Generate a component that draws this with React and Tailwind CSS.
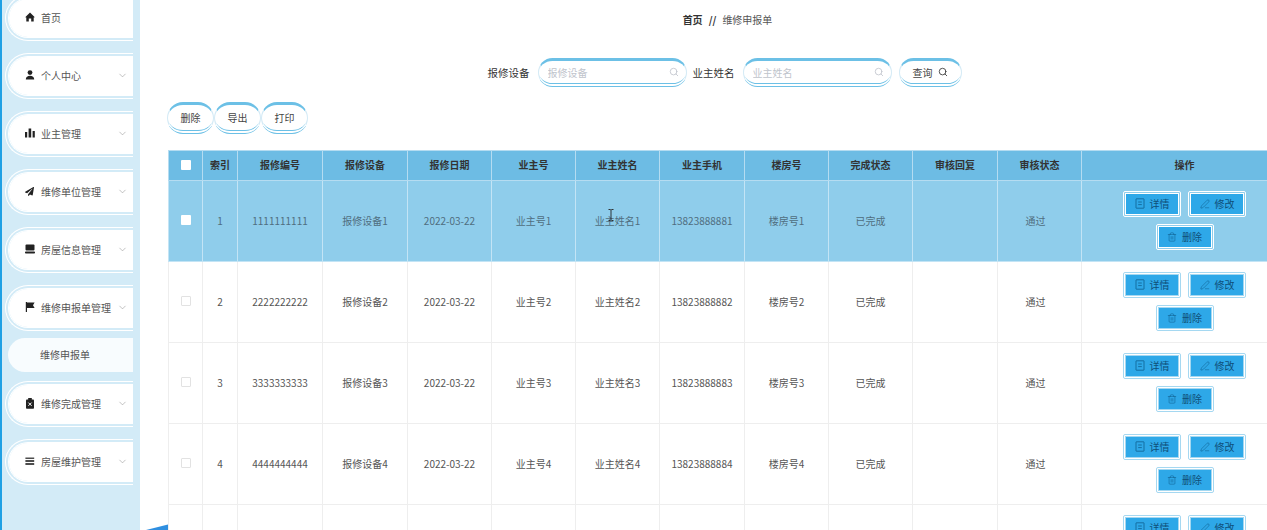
import { Search, ChevronDown, PenLine, Trash2 } from 'lucide-react';
import { FaPaperPlane } from 'react-icons/fa';

const font = { fontFamily: '"Noto Sans CJK SC", "Noto Sans", sans-serif' };

const HomeIcon = () => (
  <svg width="10" height="10" viewBox="0 0 10 10" fill="#222">
    <path d="M5 0.6L9.8 5.2L8.7 5.6V9.4H6.2V6.6H3.8V9.4H1.3V5.6L0.2 5.2Z" />
  </svg>
);
const UserIcon = () => (
  <svg width="10" height="10" viewBox="0 0 10 10" fill="#222">
    <circle cx="5" cy="2.6" r="2.4" />
    <path d="M0.8 9.6C0.8 7 2.6 5.8 5 5.8C7.4 5.8 9.2 7 9.2 9.6Z" />
  </svg>
);
const BarsIcon = () => (
  <svg width="10" height="10" viewBox="0 0 10 10" fill="#222">
    <rect x="0" y="4" width="2.2" height="5.5" />
    <rect x="3.6" y="0.5" width="2.6" height="9" />
    <rect x="7.6" y="3" width="2.2" height="6.5" />
  </svg>
);
const ScreenIcon = () => (
  <svg width="10" height="10" viewBox="0 0 10 10" fill="#222">
    <rect x="0.5" y="0.5" width="9" height="6" rx="1" />
    <rect x="0" y="7.5" width="10" height="2" rx="0.8" />
  </svg>
);
const FlagIcon = () => (
  <svg width="10" height="10" viewBox="0 0 10 10" fill="#222">
    <rect x="0.8" y="0" width="1.2" height="10" />
    <path d="M2 0.6H9.6L8 3.2L9.6 6H2Z" />
  </svg>
);
const ClaimIcon = () => (
  <svg width="10" height="11" viewBox="0 0 10 11">
    <rect x="1" y="1.4" width="8" height="9.4" rx="0.8" fill="#222" />
    <rect x="3.2" y="0" width="3.6" height="2.4" fill="#222" />
    <path d="M3.4 4.6L6.6 7.8M6.6 4.6L3.4 7.8" stroke="#fff" strokeWidth="1" />
  </svg>
);
const LinesIcon = () => (
  <svg width="10" height="10" viewBox="0 0 10 10" fill="#222">
    <rect x="0.4" y="1.6" width="8.8" height="1.2" />
    <rect x="0.4" y="4.2" width="8.8" height="1.6" />
    <rect x="0.4" y="7.2" width="8.8" height="1.6" />
  </svg>
);
const TicketIcon = () => (
  <svg width="10" height="11" viewBox="0 0 10 11" fill="none" stroke="#0f5f8f" strokeWidth="0.8">
    <rect x="1" y="0.8" width="8" height="9.4" rx="0.4" />
    <path d="M3.2 4H6.8M3.2 6.6H6.8" />
  </svg>
);

const menus = [
  { label: '首页', icon: <HomeIcon />, plain: true },
  { label: '个人中心', icon: <UserIcon /> },
  { label: '业主管理', icon: <BarsIcon /> },
  { label: '维修单位管理', icon: <FaPaperPlane size={9} color="#222" /> },
  { label: '房屋信息管理', icon: <ScreenIcon /> },
  { label: '维修申报单管理', icon: <FlagIcon />, sub: '维修申报单' },
  { label: '维修完成管理', icon: <ClaimIcon /> },
  { label: '房屋维护管理', icon: <LinesIcon /> },
];

const headers = ['索引', '报修编号', '报修设备', '报修日期', '业主号', '业主姓名', '业主手机', '楼房号', '完成状态', '审核回复', '审核状态', '操作'];

const rows = [1, 2, 3, 4, 5].map((n) => ({
  n,
  values: [
    String(n),
    String(n).repeat(10),
    '报修设备' + n,
    '2022-03-22',
    '业主号' + n,
    '业主姓名' + n,
    '1382388888' + n,
    '楼房号' + n,
    '已完成',
    '',
    '通过',
  ],
}));

function MenuItem({ item }) {
  return (
    <div className="flex h-[46px] items-center rounded-l-[24px] border-[4px] border-r-0 border-double border-white bg-white bg-clip-padding pb-[2px] pl-[16px] pr-[5px]">
      <span className="flex w-[16px] justify-start">{item.icon}</span>
      <span className="flex-1 text-[10px] text-[#555]">{item.label}</span>
      {!item.plain && <ChevronDown size={11} color="#888" strokeWidth={1.1} />}
    </div>
  );
}

const pillBorder = 'rounded-full border-x border-t-[3px] border-b-[4px] border-x-[#d5ebf6] border-t-[#6cc0e6] border-b-[#6cc0e6] border-double [border-top-style:solid] [border-left-style:solid] [border-right-style:solid] bg-white bg-clip-padding';

function SearchField({ placeholder }) {
  return (
    <div className={`flex h-[29px] w-[149px] items-center pl-[9px] pr-[7px] ${pillBorder}`}>
      <input placeholder={placeholder} className="w-full min-w-0 bg-transparent text-[10px] outline-none placeholder:text-[#c0c4cc]" />
      <Search size={10} color="#c0c4cc" className="shrink-0" />
    </div>
  );
}

function PillButton({ children, className = '' }) {
  return (
    <button className={`flex items-center justify-center gap-[5px] text-[10px] text-[#444] ${pillBorder} ${className}`}>
      {children}
    </button>
  );
}

function ActionButton({ icon, label, selected }) {
  return (
    <button className={`flex h-[26px] w-[58px] items-center justify-center gap-[5px] rounded-[2px] border-[3px] border-double bg-[#2ea8e8] bg-clip-padding text-[10px] text-[#0f4f78] ${selected ? 'border-white' : 'border-[#a5d8f1]'}`}>
      {icon}
      {label}
    </button>
  );
}

export default function App() {
  return (
    <div className="flex h-[530px] w-full overflow-hidden bg-white" style={font}>
      <aside className="flex w-[140px] shrink-0 flex-col overflow-hidden border-l-2 border-[#1fa0e4] bg-[#d3ebf7] pl-[3px] pr-[7px]">
        <div className="-mt-[5px] flex flex-col gap-[12px]">
          {menus.map((item) => (
            <div key={item.label}>
              <MenuItem item={item} />
              {item.sub && (
                <div className="mb-[-3px] ml-[3px] mt-[7px] flex h-[34px] items-center rounded-l-full bg-[#f8fcfe] pb-[2px] pl-[32px] text-[10px] text-[#555]">
                  {item.sub}
                </div>
              )}
            </div>
          ))}
        </div>
      </aside>

      <main className="relative min-w-0 flex-1 overflow-hidden pl-[27px]">
        <div className="w-[1119px]">
          <div className="flex h-[38px] items-center justify-center pl-[2px] text-[10px]">
            <span className="font-bold text-[#333]">首页</span>
            <span className="mx-[6px] font-bold text-[#333]">//</span>
            <span className="text-[#555]">维修申报单</span>
          </div>

          <div className="mt-[20px] flex h-[29px] items-center justify-center pr-[4px] text-[10.5px] text-[#333]">
            <span className="mr-[8px]">报修设备</span>
            <SearchField placeholder="报修设备" />
            <span className="ml-[6px] mr-[8px]">业主姓名</span>
            <SearchField placeholder="业主姓名" />
            <PillButton className="ml-[7px] h-[29px] w-[63px]">
              查询 <Search size={10} color="#333" />
            </PillButton>
          </div>

          <div className="mt-[15px] flex">
            <PillButton className="h-[32px] w-[47px]">删除</PillButton>
            <PillButton className="h-[32px] w-[47px]">导出</PillButton>
            <PillButton className="h-[32px] w-[47px]">打印</PillButton>
          </div>

          <table className="ml-[1px] mt-[16px] w-[1119px] table-fixed border-collapse text-center text-[10px]">
            <colgroup>
              <col className="w-[34px]" />
              <col className="w-[35px]" />
              <col className="w-[85px]" />
              <col className="w-[85px]" />
              <col className="w-[84px]" />
              <col className="w-[84px]" />
              <col className="w-[84px]" />
              <col className="w-[85px]" />
              <col className="w-[84px]" />
              <col className="w-[84px]" />
              <col className="w-[85px]" />
              <col className="w-[84px]" />
              <col className="w-[206px]" />
            </colgroup>
            <thead>
              <tr className="h-[30px] bg-[#6dbce4]">
                <th className="border border-[#b5dcf1] pb-[2px]">
                  <span className="mx-auto block h-[10px] w-[10px] rounded-[1px] bg-white" />
                </th>
                {headers.map((h) => (
                  <th key={h} className="border border-[#b5dcf1] pb-[2px] font-bold text-[#333]">{h}</th>
                ))}
              </tr>
            </thead>
            <tbody>
              {rows.map((row) => {
                const selected = row.n === 1;
                const line = selected ? 'border-[#c3e4f5]' : 'border-[#eeeeee]';
                return (
                  <tr key={row.n} className={`h-[81px] ${selected ? 'bg-[#8fcdeb] text-[#4f6d80]' : 'bg-white text-[#555]'}`}>
                    <td className={`border pb-[2px] ${line}`}>
                      <span className={`mx-auto block h-[10px] w-[10px] rounded-[1px] ${selected ? 'bg-white' : 'border border-[#e2e2e2] bg-white'}`} />
                    </td>
                    {row.values.map((v, i) => (
                      <td key={i} className={`border pb-[2px] ${line} ${i === 10 ? 'pr-[8px]' : ''}`}>{v}</td>
                    ))}
                    <td className={`border pb-[2px] ${line}`}>
                      <div className="mx-auto flex w-[130px] flex-wrap justify-center gap-[7px]">
                        <ActionButton selected={selected} label="详情" icon={<TicketIcon />} />
                        <ActionButton selected={selected} label="修改" icon={<PenLine size={10} color="#0f5f8f" strokeWidth={1.3} />} />
                        <ActionButton selected={selected} label="删除" icon={<Trash2 size={10} color="#0f5f8f" strokeWidth={1.3} />} />
                      </div>
                    </td>
                  </tr>
                );
              })}
            </tbody>
          </table>
        </div>

        {/* text cursor caught in the screenshot */}
        <svg className="absolute left-[467px] top-[209px]" width="8" height="12" viewBox="0 0 8 12" fill="none" stroke="#222" strokeWidth="0.9">
          <path d="M1.5 0.5H3.2L4 1.2L4.8 0.5H6.5M4 1.2V10.8M1.5 11.5H3.2L4 10.8L4.8 11.5H6.5" />
        </svg>
        {/* blue sliver at the bottom edge */}
        <svg className="absolute bottom-0 left-[6px]" width="22" height="6" viewBox="0 0 22 6">
          <path d="M0 6L22 0.5V6Z" fill="#2f8fe0" />
        </svg>
      </main>
    </div>
  );
}
